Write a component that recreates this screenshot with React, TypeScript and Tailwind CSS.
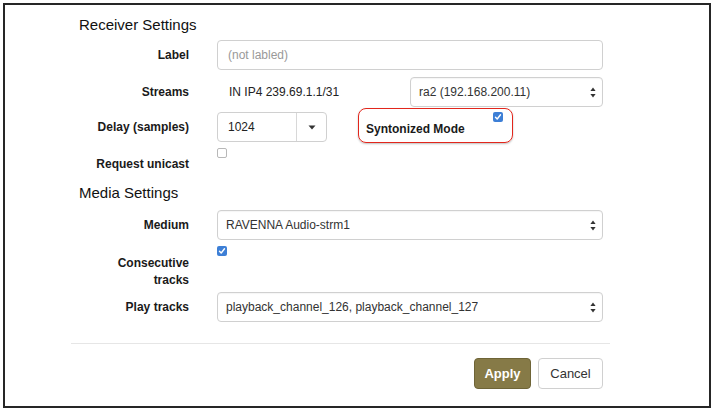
import React from "react";

const font = { fontFamily: '"Liberation Sans", Arial, sans-serif' };

function UpDown() {
  return (
    <svg width="6" height="11" viewBox="0 0 6 11" className="shrink-0">
      <path d="M3 0.5 L5.6 4 L0.4 4 Z" fill="#333" />
      <path d="M3 10.5 L5.6 7 L0.4 7 Z" fill="#333" />
    </svg>
  );
}

function Select({ value, className = "" }: { value: string; className?: string }) {
  return (
    <div
      className={`h-[30px] flex items-center justify-between pl-[8px] pr-[6px] border border-[#d0d0d0] rounded-[4px] bg-white text-[12px] text-[#333] shadow-[inset_0_1px_1px_rgba(0,0,0,0.04)] ${className}`}
    >
      <span className="truncate">{value}</span>
      <UpDown />
    </div>
  );
}

function Checkbox({ checked }: { checked?: boolean }) {
  if (checked) {
    return (
      <div className="w-[10px] h-[10px] rounded-[2px] bg-[#3d7fd6] flex items-center justify-center">
        <svg width="8" height="8" viewBox="0 0 8 8">
          <path d="M1.5 4.2 L3.2 6 L6.5 1.8" stroke="#fff" strokeWidth="1.4" fill="none" strokeLinecap="round" strokeLinejoin="round" />
        </svg>
      </div>
    );
  }
  return <div className="w-[10px] h-[10px] rounded-[2px] border border-[#b8b8b8] bg-white" />;
}

function Row({ label, children, className = "" }: { label: React.ReactNode; children: React.ReactNode; className?: string }) {
  return (
    <div className={`flex items-center gap-[28px] ${className}`}>
      <div className="w-[110px] text-right text-[12px] font-bold text-[#1a1a1a] leading-[16px]">{label}</div>
      <div className="w-[386px] flex items-center">{children}</div>
    </div>
  );
}

export default function App() {
  return (
    <div className="w-[714px] h-[412px] bg-white p-[3px]" style={font}>
      <div className="h-[405px] w-[708px] border-2 border-[#262626] pl-[66px]">
        <div className="w-[539px] flex flex-col">
          <div className="pl-[8px] mt-[10px] text-[15px] leading-[20px] text-[#111]">Receiver Settings</div>

          <div className="pl-[8px] flex flex-col">
            <Row label="Label" className="mt-[5px]">
              <div className="w-full h-[30px] flex items-center pl-[10px] border border-[#d0d0d0] rounded-[4px] text-[12px] text-[#999]">
                (not labled)
              </div>
            </Row>

            <Row label="Streams" className="mt-[7px]">
              <div className="flex-1 pl-[12px] text-[12px] text-[#222]">IN IP4 239.69.1.1/31</div>
              <Select value="ra2 (192.168.200.11)" className="w-[193px]" />
            </Row>

            <Row label="Delay (samples)" className="mt-[5px] h-[30px]">
              <div className="flex h-[30px] w-[110px] border border-[#d0d0d0] rounded-[4px]">
                <div className="w-[79px] flex items-center pl-[10px] text-[12px] text-[#222] border-r border-[#d8d8d8]">1024</div>
                <div className="flex-1 flex items-center justify-center">
                  <svg width="8" height="5" viewBox="0 0 8 5">
                    <path d="M0.5 0.5 L7.5 0.5 L4 4.5 Z" fill="#333" />
                  </svg>
                </div>
              </div>
              <div className="ml-[31px] relative w-[155px] h-[35px] -mt-[3px] border-[1.5px] border-[#e2261c] rounded-[8px] shadow-[0_1px_2px_rgba(0,0,0,0.25)] flex items-center pl-[7px] pt-[6px]">
                <span className="text-[12px] font-bold text-[#1a1a1a]">Syntonized Mode</span>
                <div className="absolute right-[9px] top-[3px]">
                  <Checkbox checked />
                </div>
              </div>
            </Row>

            <div className="flex gap-[28px] mt-[5px] h-[25px]">
              <div className="w-[110px] text-right text-[12px] font-bold text-[#1a1a1a] leading-[16px] mt-[9px]">Request unicast</div>
              <div className="mt-[1px]">
                <Checkbox />
              </div>
            </div>
          </div>

          <div className="pl-[8px] mt-[11px] text-[15px] leading-[20px] text-[#111]">Media Settings</div>

          <div className="pl-[8px] flex flex-col">
            <Row label="Medium" className="mt-[7px]">
              <Select value="RAVENNA Audio-strm1" className="w-full" />
            </Row>

            <div className="flex gap-[28px] mt-[5px]">
              <div className="w-[110px] text-right text-[12px] font-bold text-[#1a1a1a] leading-[17px] mt-[10px]">
                Consecutive
                <br />
                tracks
              </div>
              <div className="mt-[1px]">
                <Checkbox checked />
              </div>
            </div>

            <Row label="Play tracks" className="mt-[3px]">
              <Select value="playback_channel_126, playback_channel_127" className="w-full" />
            </Row>
          </div>

          <div className="mt-[21px] h-px bg-[#e6e6e6]" />

          <div className="mt-[14px] flex justify-end gap-[7px] pr-[7px]">
            <button className="w-[57px] h-[31px] rounded-[4px] bg-[#867a47] border border-[#6e6437] text-white text-[13px] font-bold">
              Apply
            </button>
            <button className="w-[65px] h-[31px] rounded-[4px] bg-white border border-[#d0d0d0] text-[#333] text-[13px]">
              Cancel
            </button>
          </div>
        </div>
      </div>
    </div>
  );
}
